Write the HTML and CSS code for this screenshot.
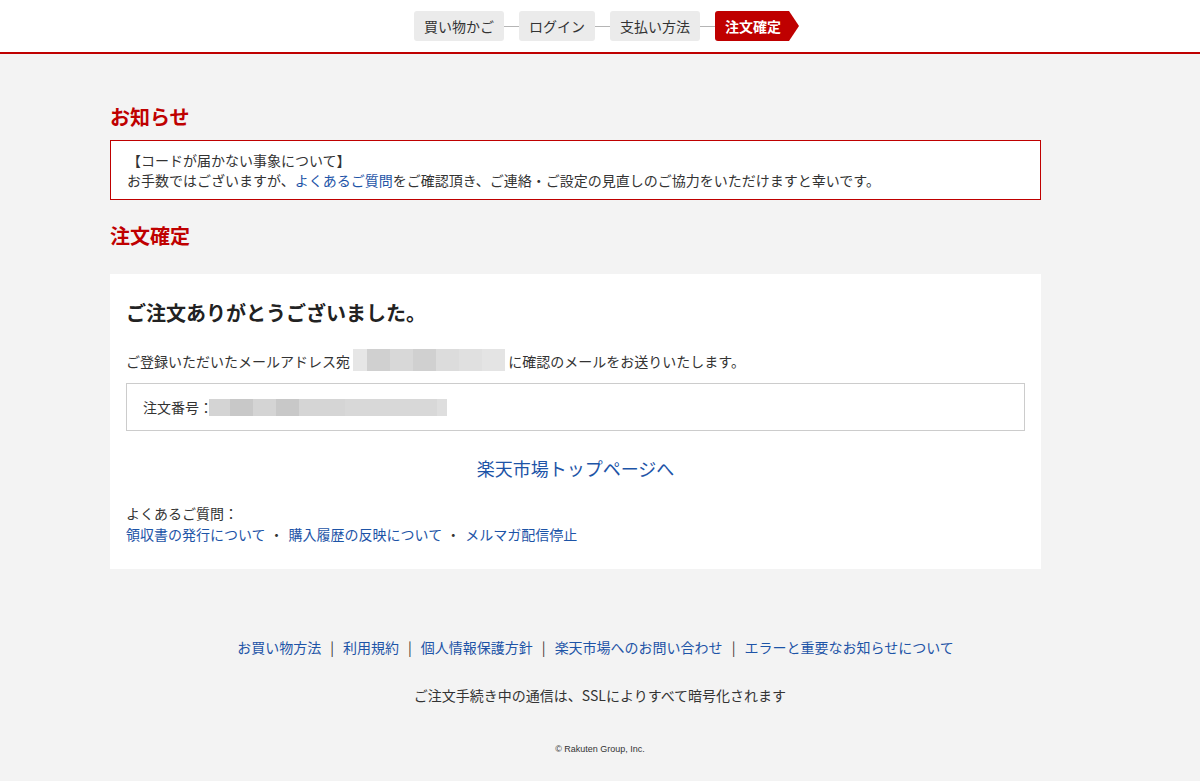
FILE: index.html
```html
<!DOCTYPE html>
<html lang="ja">
<head>
<meta charset="utf-8">
<title>注文確定</title>
<link rel="stylesheet" href="styles.css">
</head>
<body>
<header class="header">
  <ol class="steps">
    <li class="step">買い物かご</li>
    <li class="connector"></li>
    <li class="step">ログイン</li>
    <li class="connector"></li>
    <li class="step">支払い方法</li>
    <li class="connector"></li>
    <li class="step step-active">注文確定</li>
  </ol>
</header>

<main class="main">
  <div class="content">
    <h2 class="section-title">お知らせ</h2>
    <div class="notice">
      <p class="notice-title">【コードが届かない事象について】</p>
      <p>お手数ではございますが、<a href="#" class="link">よくあるご質問</a>をご確認頂き、ご連絡・ご設定の見直しのご協力をいただけますと幸いです。</p>
    </div>

    <h2 class="section-title section-title-2">注文確定</h2>
    <section class="card">
      <h1 class="thanks">ご注文ありがとうございました。</h1>
      <p class="mail-line">ご登録いただいたメールアドレス宛 <span class="blur blur-mail"></span> に確認のメールをお送りいたします。</p>
      <div class="order-box">注文番号：<span class="blur blur-order"></span></div>
      <div class="top-link-wrap"><a href="#" class="link top-link">楽天市場トップページへ</a></div>
      <div class="faq">
        <p>よくあるご質問：</p>
        <p><a href="#" class="link">領収書の発行について</a><span class="dot">・</span><a href="#" class="link">購入履歴の反映について</a><span class="dot">・</span><a href="#" class="link">メルマガ配信停止</a></p>
      </div>
    </section>
  </div>
</main>

<footer class="footer">
  <nav class="footer-links">
    <a href="#" class="link">お買い物方法</a><span class="sep">|</span><a href="#" class="link">利用規約</a><span class="sep">|</span><a href="#" class="link">個人情報保護方針</a><span class="sep">|</span><a href="#" class="link">楽天市場へのお問い合わせ</a><span class="sep">|</span><a href="#" class="link">エラーと重要なお知らせについて</a>
  </nav>
  <p class="ssl">ご注文手続き中の通信は、SSLによりすべて暗号化されます</p>
  <p class="copyright">© Rakuten Group, Inc.</p>
</footer>
</body>
</html>
```

FILE: styles.css
```css
* { box-sizing: border-box; }
html, body { margin: 0; padding: 0; }
body {
  background: #f3f3f3;
  color: #333;
  font-family: "Noto Sans CJK JP", "Noto Sans", sans-serif;
  font-size: 14px;
  line-height: 20px;
}
p, h1, h2 { margin: 0; }
a { text-decoration: none; }
.link { color: #1d54a7; }

.header {
  background: #fff;
  border-bottom: 2px solid #bf0000;
  padding: 11px 0;
}
.steps {
  list-style: none;
  margin: 0;
  padding: 0 0 0 3px;
  display: flex;
  justify-content: center;
  align-items: center;
}
.step {
  background: #ebebeb;
  border-radius: 3px;
  height: 30px;
  line-height: 30px;
  padding: 0 10px;
  font-size: 14px;
  color: #333;
}
.connector {
  width: 15px;
  height: 1px;
  background: #b5b5b5;
}
.step-active {
  position: relative;
  background: #bf0000;
  color: #fff;
  font-weight: bold;
  border-radius: 3px 0 0 3px;
  padding: 0 8px 0 10px;
}
.step-active::after {
  content: "";
  position: absolute;
  left: 100%;
  top: 0;
  border-left: 10px solid #bf0000;
  border-top: 15px solid transparent;
  border-bottom: 15px solid transparent;
}

.main {
  width: 980px;
  margin: 0 auto;
  padding-top: 49px;
}
.content {
  width: 931px;
}
.section-title {
  color: #bf0000;
  font-size: 20px;
  line-height: 28px;
  font-weight: bold;
  margin-bottom: 9px;
}
.section-title-2 {
  margin-top: 22px;
  margin-bottom: 24px;
}
.notice {
  background: #fff;
  border: 1px solid #bf0000;
  padding: 9px 16px 9px 16px;
}
.card {
  background: #fff;
  padding: 25px 16px 24px 16px;
}
.thanks {
  font-size: 20px;
  line-height: 28px;
  font-weight: bold;
  color: #222;
  margin-bottom: 24px;
}
.mail-line {
  display: flex;
  align-items: center;
  white-space: pre;
}
.blur { display: inline-block; }
.blur-mail {
  width: 152px;
  height: 22px;
  margin-top: -2px;
  background: linear-gradient(to right,
    #e6e6e6 0 14px, #d0d0d0 14px 37px, #d8d8d8 37px 60px, #d0d0d0 60px 83px,
    #dcdcdc 83px 106px, #e0e0e0 106px 129px, #e4e4e4 129px 152px);
}
.order-box {
  margin-top: 12px;
  border: 1px solid #cccccc;
  padding: 13px 16px;
  display: flex;
  align-items: center;
}
.blur-order {
  width: 238px;
  height: 17px;
  margin-left: -4px;
  background: linear-gradient(to right,
    #d4d4d4 0 21px, #c8c8c8 21px 44px, #d4d4d4 44px 67px, #c8c8c8 67px 90px,
    #d5d5d5 90px 136px, #d8d8d8 136px 228px, #dedede 228px 238px);
}
.top-link-wrap {
  text-align: center;
  margin-top: 24px;
}
.top-link {
  font-size: 18px;
  line-height: 26px;
}
.faq {
  margin-top: 22px;
  line-height: 21px;
}
.dot {
  margin: 0 5px 0 4px;
}

.footer {
  text-align: center;
  padding-top: 68px;
  padding-bottom: 27px;
}
.footer-links {
  line-height: 20px;
  padding-right: 9px;
}
.sep {
  margin: 0 9px;
  color: #333;
}
.ssl {
  margin-top: 28px;
}
.copyright {
  margin-top: 38px;
  font-family: "Liberation Sans", "Noto Sans", sans-serif;
  font-size: 9px;
  line-height: 12px;
}
```
